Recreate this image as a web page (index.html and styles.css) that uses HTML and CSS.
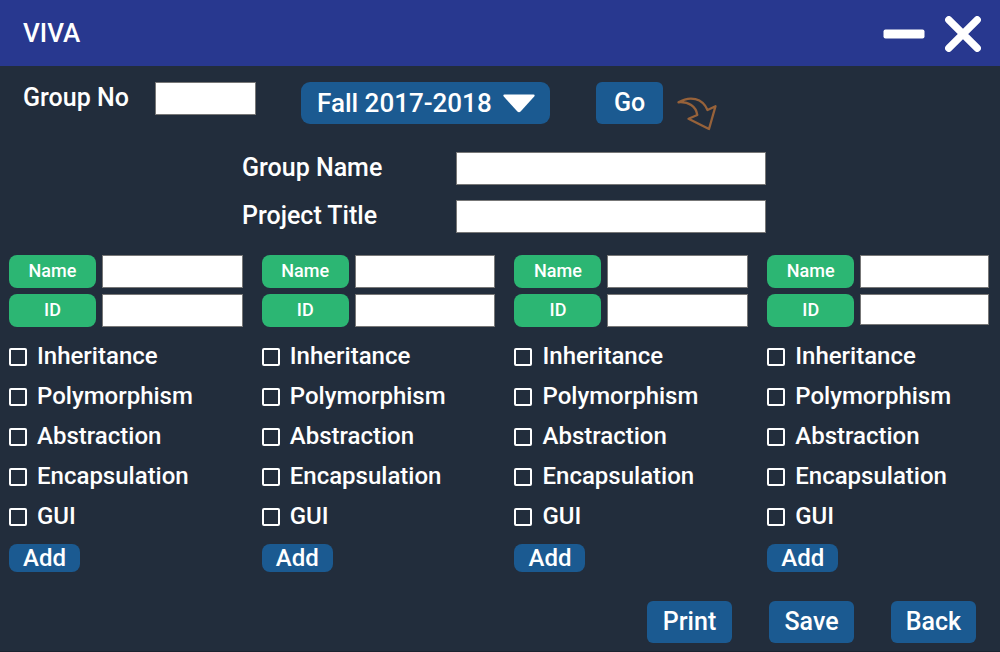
FILE: index.html
```html
<!DOCTYPE html>
<html lang="en">
<head>
<meta charset="utf-8">
<title>VIVA</title>
<link rel="stylesheet" href="styles.css">
</head>
<body>
<header class="titlebar">
  <h1 class="title">VIVA</h1>
  <div class="window-controls">
    <button class="icon-button" type="button" aria-label="Minimize">
      <svg width="42" height="36" viewBox="0 0 42 36"><rect x="0.5" y="13.5" width="41" height="9" rx="2" fill="#fff"/></svg>
    </button>
    <button class="icon-button" type="button" aria-label="Close">
      <svg width="36" height="36" viewBox="0 0 36 36"><path d="M3.8 3.8 32.2 32.2M32.2 3.8 3.8 32.2" stroke="#fff" stroke-width="7.4" stroke-linecap="round"/></svg>
    </button>
  </div>
</header>
<main class="page">
  <form class="search">
    <label class="search-label" for="group-no">Group No</label>
    <input class="field group-no" id="group-no" type="text">
    <div class="term">
      <select class="term-select" aria-label="Term"><option>Fall 2017-2018</option></select>
      <svg class="term-arrow" width="32" height="19" viewBox="0 0 32 19"><path d="M1.5 0.5H30.5Q32.4 0.8 31.2 2.6L17.6 17.6Q16 19 14.4 17.6L0.8 2.6Q-0.4 0.8 1.5 0.5Z" fill="#fff"/></svg>
    </div>
    <button class="button go" type="button">Go</button>
    <svg class="hint" width="40" height="36" viewBox="0 0 40 36" fill="none" stroke="#97623a" stroke-width="2.3" stroke-linejoin="round"><path d="M1.5 7.3C13 .5 25.500 3 30.500 15L38.500 11.200 32 34 11.500 23.700 20.300 20C19 11 11.500 6.500 1.500 7.300Z"/></svg>
  </form>
  <div class="project">
    <label for="group-name">Group Name</label>
    <input class="field" id="group-name" type="text">
    <label for="project-title">Project Title</label>
    <input class="field" id="project-title" type="text">
  </div>
  <div class="students">
    <section class="student">
      <div class="identity">
        <label class="tag" for="name-1">Name</label><input class="field" id="name-1" type="text">
        <label class="tag" for="id-1">ID</label><input class="field" id="id-1" type="text">
      </div>
      <div class="topics">
        <label class="topic"><input class="check" type="checkbox">Inheritance</label>
        <label class="topic"><input class="check" type="checkbox">Polymorphism</label>
        <label class="topic"><input class="check" type="checkbox">Abstraction</label>
        <label class="topic"><input class="check" type="checkbox">Encapsulation</label>
        <label class="topic"><input class="check" type="checkbox">GUI</label>
      </div>
      <button class="button add" type="button">Add</button>
    </section>
    <section class="student">
      <div class="identity">
        <label class="tag" for="name-2">Name</label><input class="field" id="name-2" type="text">
        <label class="tag" for="id-2">ID</label><input class="field" id="id-2" type="text">
      </div>
      <div class="topics">
        <label class="topic"><input class="check" type="checkbox">Inheritance</label>
        <label class="topic"><input class="check" type="checkbox">Polymorphism</label>
        <label class="topic"><input class="check" type="checkbox">Abstraction</label>
        <label class="topic"><input class="check" type="checkbox">Encapsulation</label>
        <label class="topic"><input class="check" type="checkbox">GUI</label>
      </div>
      <button class="button add" type="button">Add</button>
    </section>
    <section class="student">
      <div class="identity">
        <label class="tag" for="name-3">Name</label><input class="field" id="name-3" type="text">
        <label class="tag" for="id-3">ID</label><input class="field" id="id-3" type="text">
      </div>
      <div class="topics">
        <label class="topic"><input class="check" type="checkbox">Inheritance</label>
        <label class="topic"><input class="check" type="checkbox">Polymorphism</label>
        <label class="topic"><input class="check" type="checkbox">Abstraction</label>
        <label class="topic"><input class="check" type="checkbox">Encapsulation</label>
        <label class="topic"><input class="check" type="checkbox">GUI</label>
      </div>
      <button class="button add" type="button">Add</button>
    </section>
    <section class="student">
      <div class="identity">
        <label class="tag" for="name-4">Name</label><input class="field" id="name-4" type="text">
        <label class="tag" for="id-4">ID</label><input class="field short" id="id-4" type="text">
      </div>
      <div class="topics">
        <label class="topic"><input class="check" type="checkbox">Inheritance</label>
        <label class="topic"><input class="check" type="checkbox">Polymorphism</label>
        <label class="topic"><input class="check" type="checkbox">Abstraction</label>
        <label class="topic"><input class="check" type="checkbox">Encapsulation</label>
        <label class="topic"><input class="check" type="checkbox">GUI</label>
      </div>
      <button class="button add" type="button">Add</button>
    </section>
  </div>
  <footer class="actions">
    <button class="button action" type="button">Print</button>
    <button class="button action" type="button">Save</button>
    <button class="button action" type="button">Back</button>
  </footer>
</main>
</body>
</html>
```
FILE: styles.css
```css
* {
  box-sizing: border-box;
}

body {
  margin: 0;
  background: #222d3c;
  color: #fff;
  font: 500 25px/32px Roboto, sans-serif;
}

button,
input,
select {
  margin: 0;
  font: inherit;
  color: inherit;
}

svg {
  display: block;
}

.titlebar {
  display: flex;
  align-items: center;
  justify-content: space-between;
  min-height: 66px;
  padding: 0 19px 0 23px;
  background: #28388f;
}

.title {
  margin: 0;
  font: inherit;
  font-size: 26px;
}

.window-controls {
  display: flex;
  gap: 20px;
  padding-top: 2px;
}

.icon-button {
  padding: 0;
  border: 0;
  background: none;
}

.field {
  width: 100%;
  min-width: 0;
  height: 33px;
  padding: 0 6px;
  border: 1px solid #777;
  border-radius: 0;
  background: #fff;
  color: #222d3c;
}

.field.short {
  height: 31px;
}

.button {
  padding: 0 0 1px;
  border: 0;
  border-radius: 6px;
  background: #1b5a91;
  text-align: center;
}

.search {
  display: flex;
  align-items: flex-start;
  padding: 16px 23px 0;
}

.search-label {
  width: 132px;
}

.group-no {
  width: 101px;
  margin-right: 45px;
}

.term {
  position: relative;
  margin-right: 46px;
}

.term-select {
  width: 249px;
  height: 42px;
  padding: 0 50px 1px 16px;
  border: 0;
  border-radius: 9px;
  background: #1b5a91;
  font-size: 26px;
  appearance: none;
}

.term-arrow {
  position: absolute;
  top: 12px;
  right: 15px;
  pointer-events: none;
}

.go {
  width: 67px;
  height: 42px;
  margin-right: 14px;
}

.hint {
  margin-top: 13px;
}

.project {
  display: grid;
  grid-template-columns: 214px 310px;
  gap: 15px 0;
  justify-content: center;
  padding: 21px 0 0 8px;
}

.students {
  display: grid;
  grid-template-columns: 234fr 234fr 234fr 222fr;
  gap: 19px;
  padding: 22px 11px 0 9px;
}

.identity {
  display: grid;
  grid-template-columns: 87px 1fr;
  gap: 6px;
}

.tag {
  height: 33px;
  border-radius: 8px;
  background: #2cb673;
  font-size: 18px;
  text-align: center;
}

.topics {
  display: grid;
  gap: 8px;
  padding: 13px 0 12px;
}

.topic {
  display: flex;
  align-items: center;
  gap: 10px;
  font-size: 24px;
}

.check {
  width: 18px;
  height: 18px;
  margin-top: 2px;
  border: 2px solid #fff;
  border-radius: 2px;
  appearance: none;
}

.check:checked {
  background: #2cb673;
}

.add {
  display: block;
  width: 71px;
  height: 28px;
  border-radius: 8px;
  font-size: 24px;
  line-height: 26px;
}

.actions {
  display: flex;
  justify-content: flex-end;
  gap: 37px;
  padding: 29px 24px 8px;
  border-bottom: 1px solid #1b2330;
}

.action {
  width: 85px;
  height: 42px;
}
```
